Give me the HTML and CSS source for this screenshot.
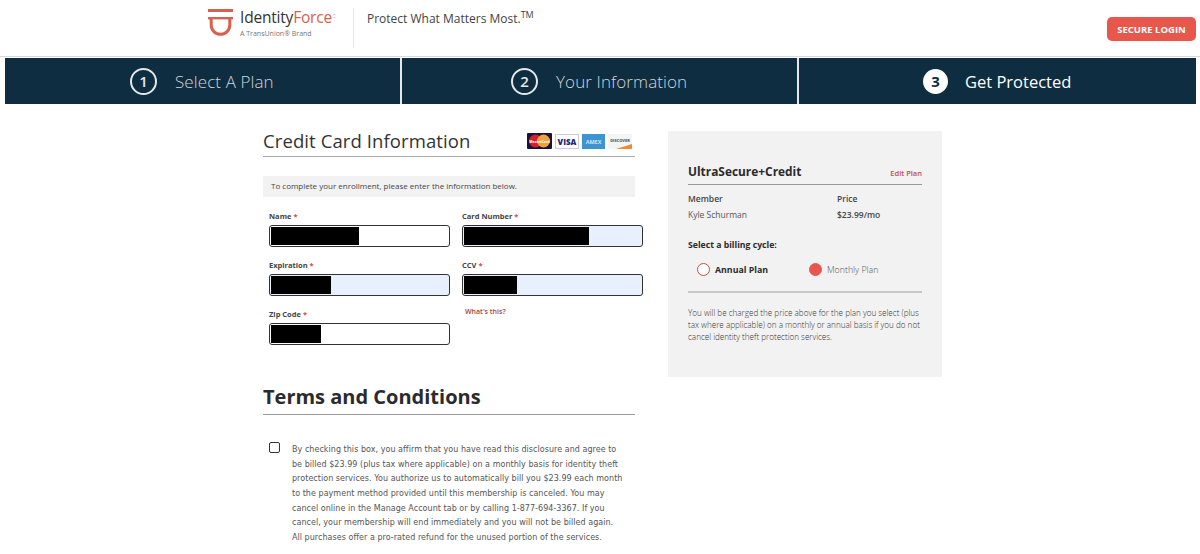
FILE: index.html
```html
<!DOCTYPE html>
<html>
<head>
    <title>IdentityForce Enrollment</title>
    <link rel="stylesheet" href="styles.css">
</head>
<body>

    <div class="header">
        <div class="logo">
            <svg class="logo-mark" width="26" height="28" viewBox="0 0 26 28">
                <rect x="0" y="0" width="25" height="3" fill="#d9604f"/>
                <rect x="0" y="8" width="25" height="2.400" fill="#d9604f"/>
                <path d="M3.200 9 V16 A9.300 9.300 0 0 0 21.800 16 V9" fill="none" stroke="#d9604f" stroke-width="3"/>
            </svg>
            <div class="logo-text">
                <div class="logo-name">Identity<span class="logo-force">Force</span><span class="logo-dot">:</span></div>
                <div class="logo-sub">A TransUnion&reg; Brand</div>
            </div>
        </div>
        <div class="tagline">Protect What Matters Most.<sup>TM</sup></div>
        <button class="login">SECURE LOGIN</button>
    </div>

    <div class="steps">
        <div class="step step-one">
            <span class="step-num">1</span>
            <span class="step-label">Select A Plan</span>
        </div>
        <div class="step step-two">
            <span class="step-num">2</span>
            <span class="step-label">Your Information</span>
        </div>
        <div class="step step-three current">
            <span class="step-num">3</span>
            <span class="step-label">Get Protected</span>
        </div>
    </div>

    <div class="main">
        <div class="left">
            <div class="card-title">
                <h2>Credit Card Information</h2>
                <div class="cards">
                    <svg width="25" height="16" viewBox="0 0 25 16">
                        <rect width="25" height="16" rx="1" fill="#14143c"/>
                        <circle cx="8.500" cy="8" r="6.500" fill="#d5202b"/>
                        <circle cx="16.500" cy="8" r="6.500" fill="#f0a23a"/>
                        <text x="12.500" y="9.500" text-anchor="middle" class="mc">MasterCard</text>
                    </svg>
                    <svg width="24" height="15" viewBox="0 0 24 15">
                        <rect x="0.500" y="0.500" width="23" height="14" fill="#fff" stroke="#ccd"/>
                        <text x="12" y="11" text-anchor="middle" class="visa">VISA</text>
                    </svg>
                    <svg width="23" height="15" viewBox="0 0 23 15">
                        <rect width="23" height="15" fill="#3d94d1"/>
                        <text x="11.500" y="9.500" text-anchor="middle" class="amex">AMEX</text>
                    </svg>
                    <svg width="24" height="15" viewBox="0 0 24 15">
                        <rect width="24" height="15" fill="#f4f4f2"/>
                        <path d="M8 15 L24 10 V15 Z" fill="#ec8a35"/>
                        <text x="12" y="8" text-anchor="middle" class="discover">DISCOVER</text>
                    </svg>
                </div>
            </div>

            <div class="notice">To complete your enrollment, please enter the information below.</div>

            <div class="form-grid">
                <div class="form-group">
                    <label>Name <span class="req">*</span></label>
                    <div class="field"><span class="redact redact-name"></span></div>
                </div>
                <div class="form-group">
                    <label>Card Number <span class="req">*</span></label>
                    <div class="field autofill"><span class="redact redact-card"></span></div>
                </div>
                <div class="form-group">
                    <label>Expiration <span class="req">*</span></label>
                    <div class="field autofill"><span class="redact redact-exp"></span></div>
                </div>
                <div class="form-group">
                    <label>CCV <span class="req">*</span></label>
                    <div class="field autofill"><span class="redact redact-ccv"></span></div>
                    <a class="whats-this">What's this?</a>
                </div>
                <div class="form-group">
                    <label>Zip Code <span class="req">*</span></label>
                    <div class="field"><span class="redact redact-zip"></span></div>
                </div>
            </div>

            <h2 class="terms-title">Terms and Conditions</h2>

            <div class="terms">
                <span class="checkbox"></span>
                <p>By checking this box, you affirm that you have read this disclosure and agree to<br>
                be billed $23.99 (plus tax where applicable) on a monthly basis for identity theft<br>
                protection services. You authorize us to automatically bill you $23.99 each month<br>
                to the payment method provided until this membership is canceled. You may<br>
                cancel online in the Manage Account tab or by calling 1-877-694-3367. If you<br>
                cancel, your membership will end immediately and you will not be billed again.<br>
                All purchases offer a pro-rated refund for the unused portion of the services.</p>
            </div>
        </div>

        <div class="panel">
            <div class="plan-head">
                <span class="plan-name">UltraSecure+Credit</span>
                <a class="edit-plan">Edit Plan</a>
            </div>
            <div class="plan-info">
                <div class="plan-col">
                    <div class="plan-key">Member</div>
                    <div class="plan-val">Kyle Schurman</div>
                </div>
                <div class="plan-col plan-col-price">
                    <div class="plan-key">Price</div>
                    <div class="plan-val price">$23.99/mo</div>
                </div>
            </div>
            <div class="cycle-title">Select a billing cycle:</div>
            <div class="cycle">
                <span class="radio"></span>
                <span class="cycle-annual">Annual Plan</span>
                <span class="radio checked"></span>
                <span class="cycle-monthly">Monthly Plan</span>
            </div>
            <p class="plan-note">You will be charged the price above for the plan you select (plus tax where applicable) on a monthly or annual basis if you do not cancel identity theft protection services.</p>
        </div>
    </div>

</body>
</html>
```

FILE: styles.css
```css
html, body {
    height: 554px;
    overflow: hidden;
}
body {
    margin: 0;
    background-color: #ffffff;
    font-family: 'Open Sans', sans-serif;
    color: #333;
}

/* Header */
.header {
    height: 57px;
    box-sizing: border-box;
    display: flex;
    align-items: flex-start;
    padding-left: 208px;
    padding-right: 4px;
    border-bottom: 1px solid #d8d8d8;
}
.logo {
    display: flex;
    width: 145px;
    height: 40px;
    margin-top: 8px;
    border-right: 1px solid #e8e8e8;
}
.logo-mark {
    margin-top: 1px;
}
.logo-text {
    margin-left: 6px;
}
.logo-name {
    font-size: 15.500px;
    line-height: 18px;
    letter-spacing: -0.2px;
    color: #333;
}
.logo-force {
    color: #d9604f;
}
.logo-dot {
    color: #d9604f;
    font-size: 8px;
    vertical-align: 5px;
    line-height: 0;
    margin-left: 1px;
}
.logo-sub {
    font-size: 7px;
    line-height: 11px;
    margin-top: 2px;
    color: #777;
}
.tagline {
    margin-left: 13px;
    margin-top: 10px;
    font-size: 12px;
    line-height: 18px;
    color: #444;
}
.tagline sup {
    font-size: 9px;
    line-height: 0;
    vertical-align: 5px;
}
.login {
    margin-left: auto;
    margin-top: 17px;
    width: 89px;
    height: 24px;
    padding: 0;
    border: none;
    border-radius: 5px;
    background-color: #e8574c;
    color: #fff;
    font-family: 'Open Sans', sans-serif;
    font-size: 9.500px;
    font-weight: 700;
}

/* Steps bar */
.steps {
    display: flex;
    margin: 1px 4px 0 5px;
    height: 46px;
    background-color: #0f2d40;
    color: #cfd6da;
}
.step {
    display: flex;
    align-items: center;
    height: 46px;
    box-sizing: border-box;
    border-right: 2px solid #e4e8ea;
}
.step-one {
    width: 397px;
    padding-left: 125px;
}
.step-two {
    width: 397px;
    padding-left: 109px;
}
.step-three {
    flex: 1;
    padding-left: 124px;
    border-right: none;
}
.step-num {
    width: 23px;
    height: 23px;
    border: 2px solid #e4e8ea;
    border-radius: 50%;
    display: flex;
    justify-content: center;
    align-items: center;
    font-size: 15px;
    font-weight: 600;
    color: #e4e8ea;
}
.step-label {
    margin-left: 18px;
    font-size: 17px;
    font-weight: 300;
    letter-spacing: 0.1px;
}
.current .step-num {
    background-color: #fff;
    border-color: #fff;
    color: #0f2d40;
    font-weight: 700;
    width: 21px;
    height: 21px;
}
.current .step-label {
    margin-left: 17px;
    font-size: 16.500px;
    letter-spacing: 0;
    color: #fff;
    font-weight: 400;
}

/* Main area */
.main {
    display: flex;
    align-items: flex-start;
    padding-left: 263px;
    padding-top: 27px;
}
.left {
    width: 372px;
}
.card-title {
    display: flex;
    justify-content: space-between;
    align-items: flex-start;
    height: 25px;
    border-bottom: 1px solid #aaa;
}
h2 {
    margin: 0;
    font-weight: 400;
}
.card-title h2 {
    margin-top: -1px;
    font-size: 18.500px;
    line-height: 22px;
    letter-spacing: 0.1px;
    color: #333;
}
.cards {
    display: flex;
    align-items: center;
    gap: 3px;
    margin-right: 3px;
    margin-top: 2px;
}
.mc {
    font-family: 'Open Sans', sans-serif;
    font-size: 3.500px;
    font-weight: 700;
    fill: #fff;
}
.visa {
    font-family: 'Open Sans', sans-serif;
    font-size: 8px;
    font-weight: 800;
    fill: #1e2a78;
}
.amex {
    font-family: 'Open Sans', sans-serif;
    font-size: 5.500px;
    font-weight: 700;
    fill: #cfe6f5;
}
.discover {
    font-family: 'Open Sans', sans-serif;
    font-size: 4px;
    font-weight: 700;
    fill: #444;
}
.notice {
    margin-top: 19px;
    height: 21px;
    line-height: 20px;
    padding-left: 8px;
    background-color: #f2f2f2;
    font-size: 8px;
    color: #444;
}
.form-grid {
    display: grid;
    grid-template-columns: 181px 181px;
    column-gap: 12px;
    grid-auto-rows: 49px;
    margin-top: 13px;
    margin-left: 6px;
    height: 144px;
}
.form-group label {
    display: block;
    height: 15px;
    line-height: 12px;
    font-size: 7.500px;
    font-weight: 700;
    color: #444;
}
.req {
    color: #c0504d;
}
.field {
    height: 22px;
    box-sizing: border-box;
    border: 1px solid #333;
    border-radius: 3px;
    padding: 1px;
    background-color: #fff;
}
.autofill {
    background-color: #e8f0fe;
}
.redact {
    display: block;
    height: 18px;
    background-color: #000;
}
.redact-name { width: 88px; }
.redact-card { width: 125px; }
.redact-exp { width: 60px; }
.redact-ccv { width: 53px; }
.redact-zip { width: 50px; }
.whats-this {
    display: block;
    margin-top: 11px;
    margin-left: 3px;
    font-size: 7px;
    font-weight: 600;
    color: #a8413c;
}
.terms-title {
    margin-top: 29px;
    height: 31px;
    line-height: 27px;
    border-bottom: 1px solid #999;
    font-size: 20px;
    font-weight: 700;
    color: #2b2b2b;
}
.terms {
    display: flex;
    margin-top: 27px;
    padding-left: 6px;
}
.checkbox {
    flex: none;
    width: 9px;
    height: 9px;
    border: 1px solid #333;
    border-radius: 2px;
    margin-right: 12px;
}
.terms p {
    margin: 0;
    margin-top: 1px;
    font-family: 'DejaVu Sans', sans-serif;
    font-size: 8px;
    line-height: 14.670px;
    letter-spacing: 0.04px;
    white-space: nowrap;
    color: #555;
}

/* Plan panel */
.panel {
    width: 274px;
    height: 246px;
    box-sizing: border-box;
    margin-left: 33px;
    padding: 27px 20px 0 20px;
    background-color: #f2f2f2;
}
.plan-head {
    display: flex;
    justify-content: space-between;
    align-items: flex-end;
    height: 26px;
    border-bottom: 1px solid #999;
}
.plan-name {
    font-size: 11.900px;
    font-weight: 700;
    line-height: 17px;
    margin-bottom: 4px;
    color: #2b2b2b;
}
.edit-plan {
    font-size: 7.500px;
    font-weight: 600;
    color: #c0504d;
    margin-bottom: 6px;
}
.plan-info {
    display: flex;
    margin-top: 6px;
    font-size: 8.500px;
    line-height: 16px;
}
.plan-col {
    flex: none;
    width: 149px;
}
.plan-col-price {
    width: 85px;
}
.plan-key {
    font-weight: 600;
    color: #444;
}
.plan-val {
    color: #555;
}
.price {
    font-weight: 600;
    color: #444;
}
.cycle-title {
    margin-top: 15px;
    font-size: 8.700px;
    font-weight: 700;
    line-height: 14px;
    color: #2b2b2b;
}
.cycle {
    display: flex;
    align-items: center;
    height: 13px;
    margin-top: 11px;
    padding-left: 9px;
    padding-bottom: 15px;
    border-bottom: 2px solid #c8c8c8;
    font-size: 8.800px;
}
.radio {
    flex: none;
    width: 11px;
    height: 11px;
    border: 1px solid #c0504d;
    border-radius: 50%;
    background-color: #fff;
}
.radio.checked {
    background-color: #e8574c;
    border-color: #e8574c;
}
.cycle-annual {
    width: 94px;
    margin-left: 5px;
    font-weight: 700;
    color: #2b2b2b;
}
.cycle-monthly {
    margin-left: 5px;
    font-weight: 300;
    color: #555;
}
.plan-note {
    margin: 14px 0 0 0;
    font-size: 8.100px;
    font-weight: 300;
    line-height: 12px;
    color: #333;
}
```
